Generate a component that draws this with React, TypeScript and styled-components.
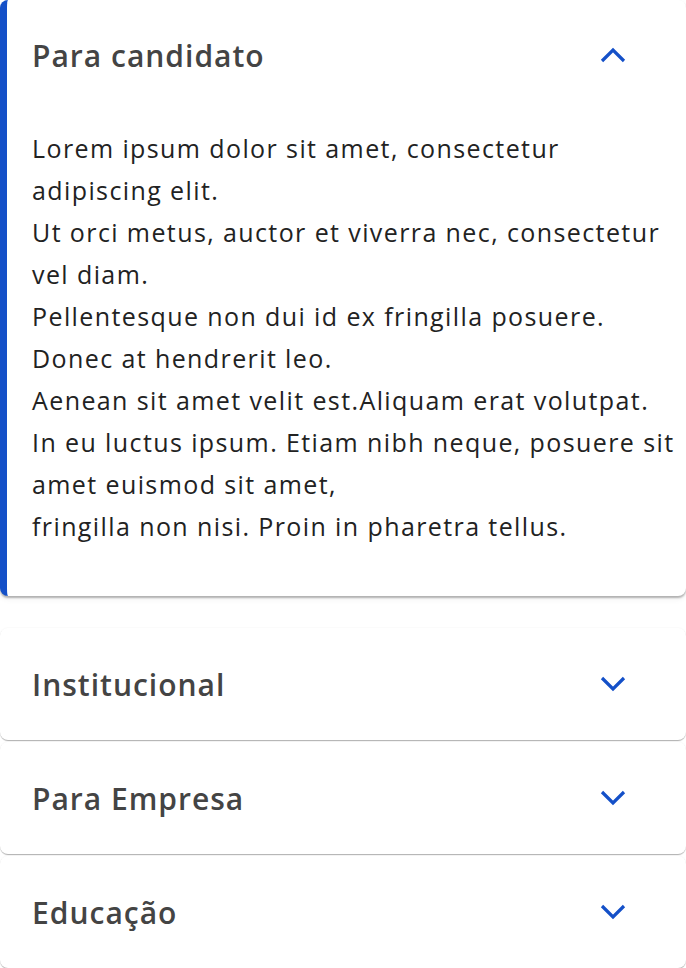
import { useState } from 'react';
import { createGlobalStyle, styled } from 'styled-components';

const GlobalStyle = createGlobalStyle`
  body {
    margin: 0;
    background: #fff;
    font-family: 'Open Sans', 'Noto Sans', sans-serif;
  }
`;

const List = styled.div`
  display: flex;
  flex-direction: column;
  width: 686px;
`;

const Item = styled.section<{ $open: boolean }>`
  background: #fff;
  border-radius: 8px;
  border-left: ${({ $open }) => ($open ? '7px solid #1450c8' : '0')};
  margin-bottom: ${({ $open }) => ($open ? '30px' : '0')};
  box-shadow: ${({ $open }) =>
    $open
      ? '0 2px 2px rgba(0, 0, 0, 0.28), 0 3px 6px rgba(0, 0, 0, 0.06)'
      : '0 1px 1px rgba(0, 0, 0, 0.22), 0 2px 1px -1px rgba(0, 0, 0, 0.12), 0 -1px 1px rgba(0, 0, 0, 0.02)'};
  & + & {
    margin-top: 2px;
  }
`;

const Header = styled.button<{ $open: boolean }>`
  display: flex;
  align-items: center;
  justify-content: space-between;
  width: 100%;
  height: ${({ $open }) => ($open ? '110px' : '112px')};
  padding: 0 60px 0 ${({ $open }) => ($open ? '25px' : '32px')};
  border: 0;
  background: transparent;
  cursor: pointer;
  font-family: inherit;
  font-size: 30px;
  font-weight: 600;
  letter-spacing: 1px;
  color: #444;
  text-align: left;
`;

const Chevron = styled.svg`
  width: 26px;
  height: 16px;
  flex-shrink: 0;
`;

const Body = styled.div`
  padding: 17px 0 49px 25px;
  font-size: 25px;
  line-height: 42px;
  letter-spacing: 1.4px;
  color: #222;
  white-space: nowrap;
`;

const lines = [
  'Lorem ipsum dolor sit amet, consectetur',
  'adipiscing elit.',
  'Ut orci metus, auctor et viverra nec, consectetur',
  'vel diam.',
  'Pellentesque non dui id ex fringilla posuere.',
  'Donec at hendrerit leo.',
  'Aenean sit amet velit est.Aliquam erat volutpat.',
  'In eu luctus ipsum. Etiam nibh neque, posuere sit',
  'amet euismod sit amet,',
  'fringilla non nisi. Proin in pharetra tellus.',
];

const sections = ['Para candidato', 'Institucional', 'Para Empresa', 'Educação'];

const App = () => {
  const [open, setOpen] = useState(0);

  return (
    <>
      <GlobalStyle />
      <List>
        {sections.map((title, i) => {
          const isOpen = open === i;
          return (
            <Item key={title} $open={isOpen}>
              <Header $open={isOpen} onClick={() => setOpen(isOpen ? -1 : i)}>
                {title}
                <Chevron viewBox="0 0 26 16" fill="none" stroke="#1450c8" strokeWidth="3.2">
                  <polyline points={isOpen ? '2,14 13,3 24,14' : '2,2 13,13 24,2'} />
                </Chevron>
              </Header>
              {isOpen && (
                <Body>
                  {lines.map((line, j) => (
                    <div key={j}>{line}</div>
                  ))}
                </Body>
              )}
            </Item>
          );
        })}
      </List>
    </>
  );
};

export default App;
